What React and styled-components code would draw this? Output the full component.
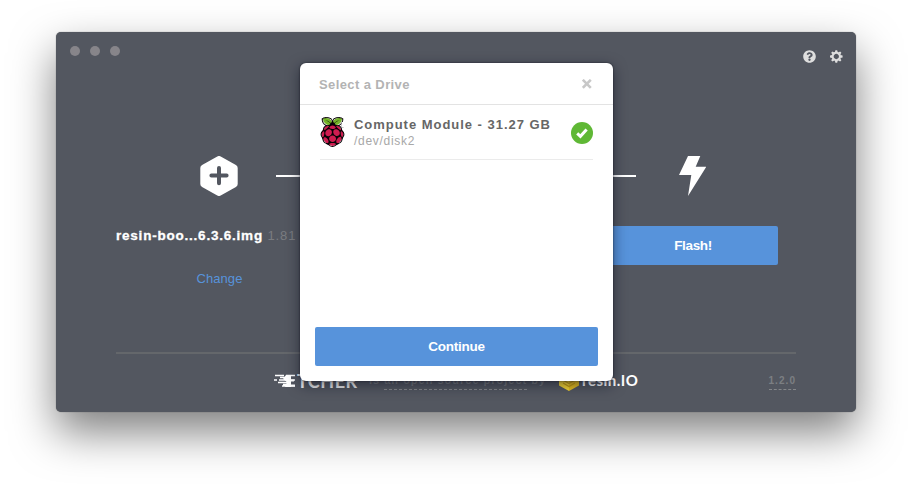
import React from "react";
import styled, { createGlobalStyle } from "styled-components";
import { SiRaspberrypi } from "react-icons/si";
import { FaQuestionCircle } from "react-icons/fa";

const GlobalStyle = createGlobalStyle`
  * { box-sizing: border-box; }
  body {
    margin: 0;
    background: #fff;
    font-family: "Liberation Sans", Arial, sans-serif;
    overflow: hidden;
  }
`;

const Desktop = styled.div`
  height: 492px;
  padding: 32px 56px;
`;

const Window = styled.main`
  position: relative;
  width: 800px;
  height: 380px;
  display: flex;
  flex-direction: column;
  border-radius: 5px;
  background: #535760;
  box-shadow: 0 0 1px rgba(0, 0, 0, 0.55), 0 20px 44px rgba(0, 0, 0, 0.5);
`;

const TitleBar = styled.header`
  height: 124px;
  padding: 14px 13px 0 14px;
  display: flex;
  justify-content: space-between;
  align-items: flex-start;
`;

const Lights = styled.div`
  display: flex;
  gap: 10px;
`;

const Light = styled.span`
  width: 10px;
  height: 10px;
  border-radius: 50%;
  background: #87858a;
`;

const Tools = styled.div`
  display: flex;
  gap: 14px;
  padding-top: 4px;
  color: #dedede;
  svg { display: block; }
`;

const StepIcons = styled.div`
  height: 40px;
  padding: 0 90px 0 84px;
  margin: 0 60px;
  display: flex;
  align-items: center;
  svg { display: block; flex: none; }
`;

const Connector = styled.span`
  width: 120px;
  height: 2px;
  background: #fff;
  margin: ${(p) => (p.$end ? "0 43px 0 auto" : "0 0 0 38px")};
`;

const Steps = styled.section`
  display: flex;
  justify-content: space-between;
  height: 125px;
  margin: 30px 60px 0;
`;

const Step = styled.div`
  width: 206px;
  display: flex;
  flex-direction: column;
  align-items: center;
`;

const ImageName = styled.div`
  margin-top: 2px;
  height: 16px;
  line-height: 16px;
  font-size: 13px;
  letter-spacing: 0.88px;
  white-space: nowrap;
  align-self: flex-start;
  color: #7a7c80;
  b { color: #fff; font-size: 13.5px; letter-spacing: 0.78px; -webkit-text-stroke: 0.3px #fff; }
`;

const ChangeLink = styled.a`
  margin: 27px 0 0 1px;
  line-height: 16px;
  font-size: 13px;
  letter-spacing: 0.05px;
  color: #5793db;
`;

const Button = styled.button`
  width: ${(p) => p.$width}px;
  height: 39px;
  padding: 0;
  border: 0;
  border-radius: 2px;
  background: #5793db;
  color: #fff;
  font: bold 13.5px "Liberation Sans", Arial, sans-serif;
  letter-spacing: ${(p) => p.$spacing || 0}px;
`;

const Footer = styled.footer`
  height: 60px;
  margin: 1px 60px 0;
  border-top: 2px solid #64676b;
  display: flex;
  align-items: flex-start;
  white-space: nowrap;
`;

const EtcherLogo = styled.div`
  display: flex;
  align-items: flex-start;
  width: 95px;
  margin: 20px 0 0 158px;
  color: #ededee;
  font: bold 18px/14px Lato, sans-serif;
  letter-spacing: 0.5px;
  svg { flex: none; }
`;

const Credit = styled.div`
  margin-top: 20px;
  width: 190px;
  font-size: 11px;
  line-height: 13px;
  font-weight: bold;
  letter-spacing: 1px;
  color: #73767b;
`;

const Underlined = styled.span`
  display: inline-block;
  height: 16px;
  border-bottom: 1px dashed #85878a;
`;

const ResinLogo = styled.div`
  display: flex;
  gap: 3px;
  margin-top: 15px;
  color: #fff;
  font: bold 15px/23px Lato, sans-serif;
  letter-spacing: 0.5px;
`;

const Version = styled.span`
  margin: 20px 0 0 auto;
  height: 16px;
  border-bottom: 1px dashed #85878a;
  color: #7c7f83;
  font-size: 10px;
  line-height: 13px;
  font-weight: bold;
  letter-spacing: 1.05px;
`;

const Modal = styled.section`
  position: absolute;
  left: 244px;
  top: 31px;
  width: 313px;
  height: 318px;
  display: flex;
  flex-direction: column;
  border-radius: 6px;
  background: #fff;
  box-shadow: 0 0 2px rgba(10, 10, 20, 0.7), 0 4px 14px rgba(10, 12, 30, 0.55);
`;

const ModalHeader = styled.header`
  height: 42px;
  padding: 2px 20px 0 19px;
  display: flex;
  align-items: center;
  justify-content: space-between;
  border-bottom: 1px solid #e3e3e3;
  color: #b3b3b3;
  font-size: 13px;
  font-weight: bold;
  letter-spacing: 0.4px;
`;

const DriveRow = styled.div`
  height: 55px;
  margin: 0 20px;
  padding-top: 2px;
  display: flex;
  align-items: center;
  border-bottom: 1px solid #ebebeb;
  svg { flex: none; }
`;

const DriveText = styled.div`
  flex: 1;
  margin: -2px 0 0 9px;
  white-space: nowrap;
`;

const DriveName = styled.div`
  color: #666;
  font-size: 13px;
  line-height: 17px;
  font-weight: bold;
  letter-spacing: 0.97px;
`;

const DrivePath = styled.div`
  color: #a8a8a8;
  font-size: 12px;
  line-height: 16px;
  letter-spacing: 0.7px;
`;

const ModalFooter = styled.div`
  margin-top: auto;
  padding: 15px;
  display: flex;
`;

const Gear = () => (
  <svg width="13" height="13" viewBox="-6.3 -6.5 13 13">
    <circle r="3.7" fill="none" stroke="currentColor" strokeWidth="2.1" />
    {[0, 45, 90, 135, 180, 225, 270, 315].map((a) => (
      <path key={a} d="M-1.4-4.2-0.9-6.3H.9L1.4-4.2Z" fill="currentColor" transform={`rotate(${a})`} />
    ))}
  </svg>
);

const HexPlus = () => (
  <svg width="38" height="40" viewBox="0 0 38 40">
    <path d="M19 3.5 34.2 12V28L19 36.5 3.8 28V12Z" fill="#fff" stroke="#fff" strokeWidth="7" strokeLinejoin="round" />
    <path d="M19 12V27.2M11.4 19.6H26.6" stroke="#535760" strokeWidth="4" strokeLinecap="round" />
  </svg>
);

const Bolt = () => (
  <svg width="27" height="40" viewBox="0 0 27 40">
    <path d="M9 0H21.3L16.7 10.8H27.3L9 40 12.3 19H0Z" fill="#fff" />
  </svg>
);

const Raspberry = () => (
  <svg width="25" height="32" viewBox="0 0 25 32">
    <clipPath id="berry">
      <path d="M0 0H25V5H21.7V10H25V30H0Z" />
    </clipPath>
    <path d="M3 1.5C6 .5 11 1 12.5 6 14 1 19 .5 22 1.5 22 6 18 9 12.5 8.5 7 9 3 6 3 1.5Z" fill="#75b52a" />
    <path d="M12.5 8C17 7 20 9 21 12 24 14 24 18 22.5 20 22 24 17 28 12.5 29 8 28 3 24 2.5 20 1 18 1 14 4 12 5 9 8 7 12.5 8Z" fill="#cf1c50" />
    <g clipPath="url(#berry)">
      <SiRaspberrypi x="-2.5" y="0" size={30} color="#080206" />
    </g>
  </svg>
);

const Check = () => (
  <svg width="22" height="22" viewBox="0 0 22 22">
    <circle cx="11" cy="11" r="11" fill="#5fb835" />
    <path d="M6.2 11.4 9.4 14.3 15.6 7.4" fill="none" stroke="#fff" strokeWidth="3" />
  </svg>
);

const Close = () => (
  <svg width="11" height="11" viewBox="0 0 11 11">
    <path d="M.8.8 8.8 8.8M8.8.8.8 8.8" stroke="#c8c8c8" strokeWidth="2.6" />
  </svg>
);

const SpeedLines = () => (
  <svg width="23" height="14" viewBox="0 0 23 14">
    <path d="M1 1.5H10M12 1.5H21M6 3.5H16M0 6H3M5 6H21M4 8.5H16M8 12H21M9 10.5H16" stroke="#fff" strokeWidth="1.5" />
    <path d="M12 1H17V13H11L13 8 9 5Z" fill="#fff" />
    <path d="M12 11.5H21M12 6.5H20" stroke="#fff" strokeWidth="2" />
  </svg>
);

const Cube = () => (
  <svg width="20" height="22" viewBox="0 0 20 22">
    <path d="M10 0 20 5.5 10 11 0 5.5Z" fill="#f8df4b" />
    <path d="M0 5.5 10 11V22L0 16.5Z" fill="#f8d833" />
    <path d="M20 5.5 10 11V22L20 16.5Z" fill="#e8c021" />
    <path d="M4 11 10 14.5 16 11M4 14 10 17.5 16 14" fill="none" stroke="#c99f10" strokeWidth="1.2" />
  </svg>
);

export default function App() {
  return (
    <Desktop>
      <GlobalStyle />
      <Window>
        <TitleBar>
          <Lights><Light /><Light /><Light /></Lights>
          <Tools><FaQuestionCircle size={13} /><Gear /></Tools>
        </TitleBar>
        <StepIcons>
          <HexPlus />
          <Connector />
          <Connector $end />
          <Bolt />
        </StepIcons>
        <Steps>
          <Step>
            <ImageName><b>resin-boo...6.3.6.img</b> 1.81 GB</ImageName>
            <ChangeLink>Change</ChangeLink>
          </Step>
          <Step><Button $width={170} $spacing={-0.35}>Flash!</Button></Step>
        </Steps>
        <Footer>
          <EtcherLogo><SpeedLines />TCHER</EtcherLogo>
          <Credit>is <Underlined>an open source project</Underlined> by</Credit>
          <ResinLogo><Cube />resin.IO</ResinLogo>
          <Version>1.2.0</Version>
        </Footer>
        <Modal>
          <ModalHeader>Select a Drive<Close /></ModalHeader>
          <DriveRow>
            <Raspberry />
            <DriveText>
              <DriveName>Compute Module - 31.27 GB</DriveName>
              <DrivePath>/dev/disk2</DrivePath>
            </DriveText>
            <Check />
          </DriveRow>
          <ModalFooter><Button $width={283} $spacing={-0.25}>Continue</Button></ModalFooter>
        </Modal>
      </Window>
    </Desktop>
  );
}
